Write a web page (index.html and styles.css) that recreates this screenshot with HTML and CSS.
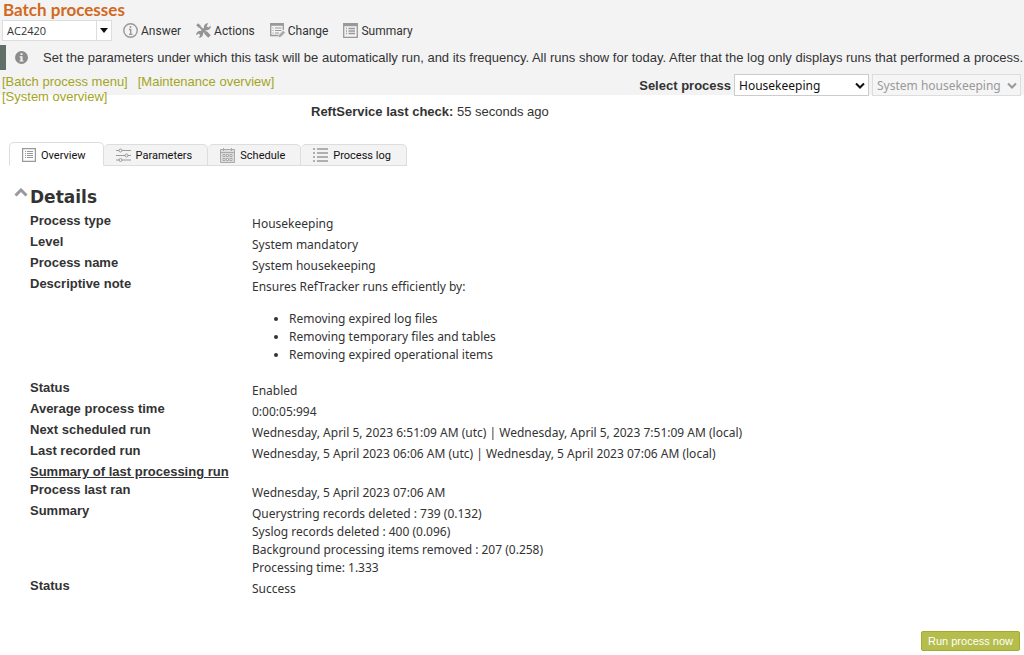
FILE: index.html
```html
<!DOCTYPE html>
<html lang="en">
<head>
    <meta charset="UTF-8">
    <meta name="viewport" content="width=device-width, initial-scale=1.0">
    <title>Batch processes</title>
    <link rel="stylesheet" href="styles.css">
</head>
<body>
    <header class="header">
        <h1>Batch processes</h1>
        <div class="toolbar">
            <div class="combo">
                <input type="text" id="question" value="AC2420" aria-label="Question number">
                <button type="button" class="combo-btn" aria-label="Open list">
                    <svg width="8" height="5" viewBox="0 0 8 5"><path d="M0 0h8L4 5z" fill="#111"/></svg>
                </button>
            </div>
            <a href="#" class="tool">
                <svg width="15" height="15" viewBox="0 0 15 15" fill="none" stroke="#999"><circle cx="7.5" cy="7.5" r="6.7" stroke-width="1.4"/><circle cx="7.5" cy="4.1" r="1" fill="#999" stroke="none"/><path d="M6 6.5h1.7v4.8M6 11.4h3.4" stroke-width="1.4"/></svg>
                Answer
            </a>
            <a href="#" class="tool">
                <svg width="15" height="15" viewBox="0 0 15 15" fill="none" stroke="#949494"><path d="M1.2 1.2l2.6 2.6" stroke-width="2.8"/><path d="M3 3l6.5 6.5" stroke-width="1.8"/><path d="M9.3 9.3l4.2 4.2" stroke-width="3.6"/><path d="M3.6 11.4l6-6" stroke-width="3"/><path d="M14.8 2.8l-2.7 1.8-1.5-1.5L12.4.3A4 4 0 0 0 8 5.2L9.8 7a4 4 0 0 0 5-4.2zM.2 12.2l2.7-1.8 1.5 1.5-1.8 2.8A4 4 0 0 0 7 9.8L5.2 8a4 4 0 0 0-5 4.2z" fill="#949494" stroke="none"/></svg>
                Actions
            </a>
            <a href="#" class="tool">
                <svg width="15" height="15" viewBox="0 0 15 15" fill="none" stroke="#999"><path d="M8.5 12.5H.7V.7h12.6V7" stroke-width="1.3"/><path d="M.5 1.8h13" stroke-width="2"/><path d="M2.5 5h1M5 5h6.5M2.5 7.5h1M5 7.5h6.5M2.5 10h1M5 10h4" stroke-width="1.2"/><path d="M9 14l.6-2.3 3.6-3.6 1.5 1.5-3.6 3.7z" fill="#aaa" stroke-width=".6"/></svg>
                Change
            </a>
            <a href="#" class="tool">
                <svg width="15" height="15" viewBox="0 0 15 15" fill="none" stroke="#999"><path d="M.7.7h13.6v13.6H.7z" stroke-width="1.3"/><path d="M.5 2h14" stroke-width="2.4"/><path d="M3 5.5h1M5.5 5.5H12M3 8h1M5.5 8H12M3 10.5h1M5.5 10.5H12" stroke-width="1.3"/></svg>
                Summary
            </a>
        </div>
        <div class="info">
            <svg width="13" height="13" viewBox="0 0 13 13"><circle cx="6.5" cy="6.5" r="6.5" fill="#8c8c8c"/><path d="M5.5 2.2h2v1.7h-2zM4.6 5.2h2.9v4.2h1v1.2h-4V9.4h1v-3h-.9z" fill="#f3f3f3"/></svg>
            <p>Set the parameters under which this task will be automatically run, and its frequency. All runs show for today. After that the log only displays runs that performed a process.</p>
        </div>
        <div class="nav-row">
            <nav class="links">
                <a href="#">[Batch process menu]</a>
                <a href="#">[Maintenance overview]</a>
                <a href="#">[System overview]</a>
            </nav>
            <div class="selector">
                <label for="processType">Select process</label>
                <span class="select-wrap">
                    <select id="processType" class="type-select">
                        <option>Housekeeping</option>
                    </select>
                    <svg width="10" height="7" viewBox="0 0 10 7"><path d="M1 1.5l4 4 4-4" fill="none" stroke="#111" stroke-width="2"/></svg>
                </span>
                <span class="select-wrap">
                    <select class="name-select" aria-label="Process name" disabled>
                        <option>System housekeeping</option>
                    </select>
                    <svg width="10" height="7" viewBox="0 0 10 7"><path d="M1 1.5l4 4 4-4" fill="none" stroke="#999" stroke-width="2"/></svg>
                </span>
            </div>
        </div>
    </header>

    <main>
        <p class="last-check"><strong>ReftService last check:</strong> 55 seconds ago</p>

        <div class="tabs" role="tablist">
            <button type="button" role="tab" class="tab active" aria-selected="true">
                <svg width="14" height="14" viewBox="0 0 14 14" fill="none" stroke="#999"><path d="M.6.6h12.8v12.8H.6z" stroke-width="1.2"/><path d="M3 3.5h1M5 3.5h6M3 5.5h1M5 5.5h6M3 7.5h1M5 7.5h6M3 9.5h1M5 9.5h6"/></svg>
                Overview
            </button>
            <button type="button" role="tab" class="tab">
                <svg width="15" height="14" viewBox="0 0 15 14" fill="#f3f3f3" stroke="#999"><path d="M0 2.5h15M0 7.5h15M0 12h15"/><circle cx="4.5" cy="2.5" r="1.5"/><circle cx="10.5" cy="7.5" r="1.5"/><circle cx="4.5" cy="12" r="1.5"/></svg>
                Parameters
            </button>
            <button type="button" role="tab" class="tab">
                <svg width="15" height="15" viewBox="0 0 15 15" fill="none" stroke="#aaa"><path d="M.5 1.5h14v13H.5z" fill="#ddd"/><path d="M1 4.5h13M3.5 0v3M11.5 0v3"/><path d="M3 6.5h2v2H3zM6.5 6.5h2v2h-2zM10 6.5h2v2h-2zM3 10.5h2v2H3zM6.5 10.5h2v2h-2zM10 10.5h2v2h-2z" fill="#fff" stroke="#999" stroke-width=".8"/></svg>
                Schedule
            </button>
            <button type="button" role="tab" class="tab">
                <svg width="15" height="14" viewBox="0 0 15 14" fill="none" stroke="#999" stroke-width="1.4"><path d="M0 1h2M4 1h11M0 5h2M4 5h11M0 9h2M4 9h11M0 13h2M4 13h11"/></svg>
                Process log
            </button>
        </div>

        <section class="details">
            <h2>
                <button type="button" class="collapse" aria-label="Collapse details">
                    <svg width="14" height="9" viewBox="0 0 14 9"><path d="M1.5 7.5L7 2l5.5 5.5" fill="none" stroke="#999" stroke-width="3"/></svg>
                </button>
                Details
            </h2>
            <dl class="fields">
                <dt>Process type</dt>
                <dd>Housekeeping</dd>
                <dt>Level</dt>
                <dd>System mandatory</dd>
                <dt>Process name</dt>
                <dd>System housekeeping</dd>
                <dt>Descriptive note</dt>
                <dd>
                    Ensures RefTracker runs efficiently by:
                    <ul>
                        <li>Removing expired log files</li>
                        <li>Removing temporary files and tables</li>
                        <li>Removing expired operational items</li>
                    </ul>
                </dd>
                <dt>Status</dt>
                <dd>Enabled</dd>
                <dt>Average process time</dt>
                <dd>0:00:05:994</dd>
                <dt>Next scheduled run</dt>
                <dd>Wednesday, April 5, 2023 6:51:09 AM (utc) | Wednesday, April 5, 2023 7:51:09 AM (local)</dd>
                <dt>Last recorded run</dt>
                <dd>Wednesday, 5 April 2023 06:06 AM (utc) | Wednesday, 5 April 2023 07:06 AM (local)</dd>
            </dl>
            <h3>Summary of last processing run</h3>
            <dl class="fields">
                <dt>Process last ran</dt>
                <dd>Wednesday, 5 April 2023 07:06 AM</dd>
                <dt>Summary</dt>
                <dd>
                    Querystring records deleted : 739 (0.132)<br>
                    Syslog records deleted : 400 (0.096)<br>
                    Background processing items removed : 207 (0.258)<br>
                    Processing time: 1.333
                </dd>
                <dt>Status</dt>
                <dd>Success</dd>
            </dl>
        </section>

        <div class="actions">
            <button type="button" class="run-btn">Run process now</button>
        </div>
    </main>
</body>
</html>
```
FILE: styles.css
```css
* { box-sizing: border-box; }
body { margin: 0; background: #fff; color: #333; font-family: "Liberation Sans", Arial, sans-serif; font-size: 13px; }
svg { display: block; flex: none; }
h1, h2, h3, p, dl, dd { margin: 0; }

.header { display: flow-root; background: #f3f3f3; }
.header h1 { padding-left: 3px; color: #d2691e; font-family: Lato, sans-serif; font-size: 17px; font-weight: bold; line-height: 19px; }

.toolbar { display: flex; align-items: center; gap: 15px; height: 23px; padding-left: 2px; }
.combo { display: flex; width: 110px; height: 21px; margin-right: -4px; border: 1px solid #ddd; background: #fff; }
.combo input { flex: 1; min-width: 0; padding: 0 4px; border: 0; color: #333; font-family: "Open Sans", sans-serif; font-size: 11px; }
.combo-btn { display: flex; align-items: center; justify-content: center; width: 15px; padding: 0; border: 0; border-left: 1px solid #ddd; background: #fff; }
.tool { display: flex; align-items: center; gap: 3px; color: #333; font-family: Roboto, sans-serif; font-size: 12px; text-decoration: none; }

.info { display: flex; align-items: center; gap: 15px; min-height: 25px; margin-top: 3px; padding-left: 9px; border-left: 6px solid #5f7068; }
.info p { font-size: 13px; line-height: 18px; }

/* second line of links hangs below the grey bar */
.nav-row { display: flex; justify-content: space-between; margin-bottom: -9px; padding: 4px 3px 0 2px; }
.links { display: flex; flex-wrap: wrap; column-gap: 10px; width: 300px; }
.links a { color: #a3a51e; font-size: 13px; line-height: 15px; text-decoration: none; }
.selector { display: flex; align-items: center; gap: 3px; height: 22px; }
.selector label { font-weight: bold; font-size: 13px; }
.select-wrap { position: relative; }
.select-wrap svg { position: absolute; right: 4px; top: 8px; pointer-events: none; }
select { appearance: none; height: 22px; padding: 0 4px; border: 1px solid #ccc; border-radius: 0; background: #fff; color: #111; font-family: "Noto Sans", sans-serif; font-size: 12px; }
select:disabled { border-color: #ddd; background: #f5f5f5; color: #999; opacity: 1; }
.type-select { width: 135px; }
.name-select { width: 149px; }

.last-check { padding: 8px 0 0 311px; line-height: 18px; }

.tabs { display: flex; align-items: flex-end; margin: 21px 0 0 9px; }
.tab { display: flex; align-items: center; gap: 5px; height: 22px; padding: 0 15px 0 12px; border: 1px solid #ddd; border-left-width: 0; border-radius: 5px 5px 0 0; background: #f3f3f3; color: #111; font-family: Roboto, sans-serif; font-size: 11px; }
.tab.active { height: 24px; padding: 2px 17px 0 12px; border-left-width: 1px; border-bottom-color: #fff; background: #fff; }

.details { padding: 20px 0 0 30px; }
.details h2 { position: relative; font-family: "DejaVu Sans", Verdana, sans-serif; font-size: 17px; line-height: 22px; margin-bottom: 4px; }
.collapse { position: absolute; left: -16px; top: 2px; padding: 0; border: 0; background: none; }
.details h3 { font-size: 13px; line-height: 18px; text-decoration: underline; }
.fields { display: grid; grid-template-columns: 222px 1fr; }
.fields dt { font-weight: bold; font-size: 13px; line-height: 18px; }
.fields dd { padding-top: 3px; font-family: "Noto Sans", sans-serif; font-size: 12px; line-height: 18px; }
.fields ul { margin: 14px 0 15px; padding-left: 37px; }

.actions { display: flex; justify-content: flex-end; padding: 33px 4px 4px; }
.run-btn { height: 20px; padding: 0 6px; border: 1px solid #a5ab2c; border-radius: 2px; background: #b5bd4c; color: #fff; font-family: "Liberation Sans", Arial, sans-serif; font-size: 11px; }
```
